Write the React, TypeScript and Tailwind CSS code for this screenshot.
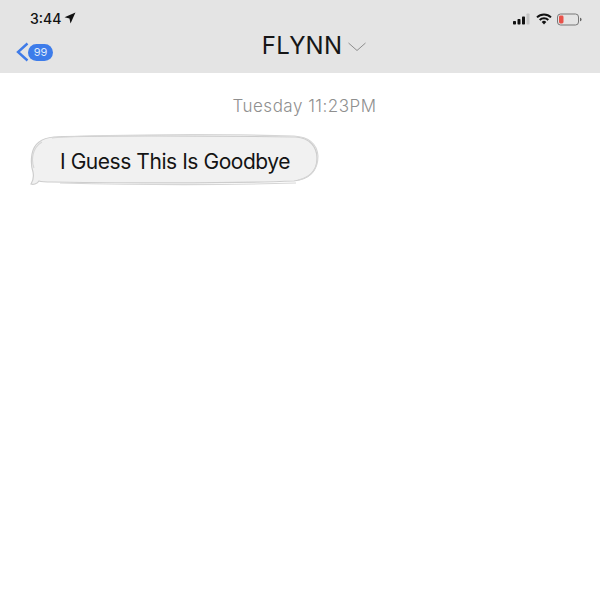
function LocationArrow() {
  return (
    <svg width="12" height="12" viewBox="0 0 11 11" className="ml-[3px] mt-[-2px]">
      <path d="M10.5 0.5 L0.5 4.8 L5 5.9 L6 10.5 Z" fill="#111" />
    </svg>
  )
}

function StatusIcons() {
  return (
    <div className="flex items-center">
      <svg width="18" height="12" viewBox="0 0 18 12" className="mr-[5px]">
        <rect x="0" y="8" width="3" height="3.5" rx="0.7" fill="#111" />
        <rect x="4.5" y="6" width="3" height="5.5" rx="0.7" fill="#111" />
        <rect x="9" y="3.5" width="3" height="8" rx="0.7" fill="#111" />
        <rect x="13.5" y="0.5" width="3" height="11" rx="0.7" fill="#c4c4c4" />
      </svg>
      <svg width="16" height="12" viewBox="0 0 16 12" className="mr-[5px]">
        <path d="M1 4.4 A10 10 0 0 1 15 4.4" fill="none" stroke="#111" strokeWidth="2" />
        <path d="M3.7 7 A6.2 6.2 0 0 1 12.3 7" fill="none" stroke="#111" strokeWidth="2" />
        <path d="M5.7 8.9 A3.3 3.3 0 0 1 10.3 8.9 L8 11.5 Z" fill="#111" />
      </svg>
      <svg width="26" height="13" viewBox="0 0 26 13">
        <rect x="0.5" y="1" width="21" height="11" rx="3" fill="none" stroke="#777" strokeWidth="1" />
        <rect x="2" y="2.5" width="4.5" height="8" rx="1.4" fill="#e9524a" />
        <path d="M23 4.7 C24.3 5 24.6 5.7 24.6 6.5 C24.6 7.3 24.3 8 23 8.3 Z" fill="#666" />
      </svg>
    </div>
  )
}

function Header() {
  return (
    <header className="h-[73px] bg-[#e4e4e4]">
      <div className="flex h-[37px] items-center justify-between pl-[30px] pr-[17px] pt-[1px]">
        <div className="flex items-center text-[14px] font-medium leading-none text-[#111]">
          3:44
          <LocationArrow />
        </div>
        <StatusIcons />
      </div>
      <div className="relative flex h-[36px] items-center justify-center">
        <div className="absolute left-[16px] top-[5px] flex items-center">
          <svg width="13" height="20" viewBox="0 0 13 20">
            <path d="M11.5 1.5 L2 10 L11.5 18.5" fill="none" stroke="#3f7be8" strokeWidth="2.4" />
          </svg>
          <span className="ml-[-1px] flex h-[17px] w-[25px] items-center justify-center rounded-full bg-[#3d7cea] text-[11px] text-[#dfe9fb]">
            99
          </span>
        </div>
        <div className="flex items-center pb-[18px] pl-[29px]">
          <span className="text-[24px] leading-none tracking-[0.2px] text-[#161616]">FLYNN</span>
          <svg width="20" height="10" viewBox="0 0 20 10" className="ml-[5px] mt-[2px]">
            <path d="M1.5 1 L10 8.5 L18.5 1" fill="none" stroke="#8d8d8d" strokeWidth="1" />
          </svg>
        </div>
      </div>
    </header>
  )
}

function SketchBubble() {
  return (
    <div className="relative ml-[30px] flex h-[52px] w-[289px] items-center pl-[30px] pt-[2px]">
      <svg width="289" height="52" viewBox="0 0 289 52" className="absolute left-0 top-0">
        <path
          d="M24 3 C90 1 190 2 266 3 C280 4 287 13 287 24 C287 37 279 45 264 47 C190 50 90 49 22 48 C16 48 12 48 9 47 C7 50 3 51 1 50 C3 47 4 43 3 38 C1 32 1 26 2 20 C4 9 12 4 24 3 Z"
          fill="#f1f1f1"
          stroke="#cdcdcd"
          strokeWidth="1.2"
        />
        <path
          d="M22 4 C60 0 200 0 264 2 C279 3 287 10 288 22 C288 34 282 43 268 46 M266 49 C200 51 110 51 30 49 M4 34 C1 26 2 14 12 8"
          fill="none"
          stroke="#d6d6d6"
          strokeWidth="1.1"
        />
      </svg>
      <span className="relative whitespace-nowrap text-[21px] leading-none tracking-[-0.45px] text-[#141414]">
        I Guess This Is Goodbye
      </span>
    </div>
  )
}

export default function App() {
  return (
    <div className="h-[600px] w-[600px] overflow-hidden bg-white font-['Inter',sans-serif]">
      <Header />
      <div className="flex h-[60px] items-start justify-center pt-[25px]">
        <span className="pl-[9px] text-[17px] font-light leading-none tracking-[0.5px] text-[#8f8f8f]">
          Tuesday 11:23PM
        </span>
      </div>
      <div className="mt-[1px]">
        <SketchBubble />
      </div>
    </div>
  )
}
